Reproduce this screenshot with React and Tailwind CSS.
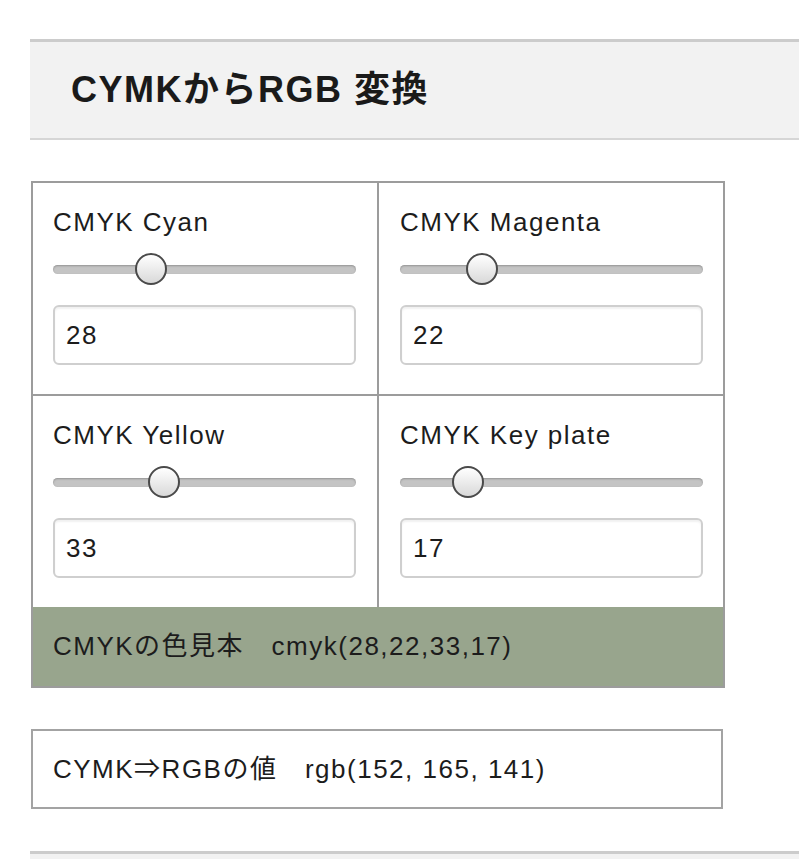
import React from 'react';

const font = "font-['Liberation_Sans','Noto_Sans_CJK_JP',sans-serif]";

const Slider = ({ value }) => (
    <div className="relative h-[32px] w-[303px] flex items-center">
        <div className="h-[9px] w-full rounded-full bg-[#c4c4c4] shadow-[inset_0_1px_2px_rgba(0,0,0,0.25)]" />
        <div
            className="absolute top-0 w-[32px] h-[32px] rounded-full border-2 border-[#4a4a4a] bg-gradient-to-b from-white to-[#d9d9d9]"
            style={{ left: `${6 + value * 2.71}px` }}
        />
    </div>
);

const Cell = ({ label, value, className }) => (
    <div className={`pt-[19px] pb-[29px] ${className}`}>
        <div className="h-[40px] leading-[40px] text-[26px] tracking-[1.5px] text-[#1c1c1c]">{label}</div>
        <div className="mt-[11px]">
            <Slider value={value} />
        </div>
        <input
            readOnly
            value={value}
            className={`mt-[20px] block w-[303px] h-[60px] border-2 border-[#cfcfcf] rounded-[6px] pl-[11px] text-[26px] tracking-[1.5px] text-[#1c1c1c] bg-white shadow-[inset_0_2px_2px_rgba(0,0,0,0.06)] outline-none ${font}`}
        />
    </div>
);

const App = () => {
    const c = 28, m = 22, y = 33, k = 17;
    const r = Math.floor(255 * (1 - c / 100) * (1 - k / 100));
    const g = Math.floor(255 * (1 - m / 100) * (1 - k / 100));
    const b = Math.floor(255 * (1 - y / 100) * (1 - k / 100));

    return (
        <div className={`min-h-[859px] bg-white pt-[39px] text-[#1c1c1c] ${font}`}>
            {/* Title */}
            <div className="ml-[30px] h-[101px] border-t-[3px] border-b-2 border-t-[#cccccc] border-b-[#d6d6d6] bg-[#f2f2f2] flex items-center pl-[41px]">
                <h1 className="text-[36px] font-bold tracking-[1.5px] leading-none text-[#1a1a1a]">CYMKからRGB 変換</h1>
            </div>

            {/* Sliders */}
            <div className="mt-[41px] ml-[31px] w-[694px] border-2 border-[#9c9c9c]">
                <div className="grid grid-cols-[346px_344px]">
                    <Cell label="CMYK Cyan" value={c} className="pl-[20px] border-r-2 border-b-2 border-[#9c9c9c]" />
                    <Cell label="CMYK Magenta" value={m} className="pl-[21px] border-b-2 border-[#9c9c9c]" />
                    <Cell label="CMYK Yellow" value={y} className="pl-[20px] border-r-2 border-[#9c9c9c]" />
                    <Cell label="CMYK Key plate" value={k} className="pl-[21px]" />
                </div>
                <div className="h-[79px] bg-[#98a58d] flex items-center pl-[20px] text-[26px] tracking-[1.5px]">
                    CMYKの色見本　cmyk({c},{m},{y},{k})
                </div>
            </div>

            {/* Result */}
            <div className="mt-[41px] ml-[31px] w-[692px] h-[80px] border-2 border-[#a3a3a3] flex items-center pl-[20px] text-[26px] tracking-[1.5px]">
                CYMK⇒RGBの値　rgb({r}, {g}, {b})
            </div>

            <div className="mt-[42px] ml-[30px] h-[20px] border-t-[3px] border-[#cccccc] bg-[#f2f2f2]" />
        </div>
    );
};

export default App;
